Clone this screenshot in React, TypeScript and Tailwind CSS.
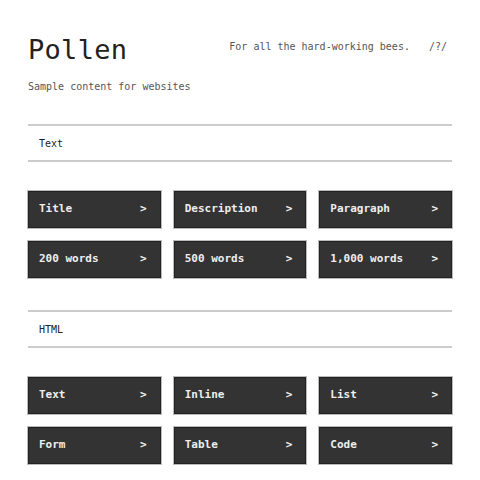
const mono = "font-['DejaVu_Sans_Mono','Liberation_Mono',monospace]";

const sections = [
  { title: "Text", items: ["Title", "Description", "Paragraph", "200 words", "500 words", "1,000 words"] },
  { title: "HTML", items: ["Text", "Inline", "List", "Form", "Table", "Code"] },
];

function Item({ label }: { label: string }) {
  return (
    <button className="flex h-[37px] items-center justify-between border border-[#222] bg-[#333] px-[10px] text-[11px] font-bold text-[#eee] shadow-[0_0_0_1px_#bbb]">
      <span>{label}</span>
      <span className="pr-[3px]">&gt;</span>
    </button>
  );
}

export default function App() {
  return (
    <div className={`min-h-[480px] w-[480px] bg-white px-[28px] pt-[33px] text-[#222] ${mono}`}>
      <header className="flex items-start justify-between">
        <div>
          <h1 className="text-[27px] leading-[34px] font-normal tracking-[0.3px]">Pollen</h1>
          <p className="mt-[12px] text-[10px] text-[#555]">Sample content for websites</p>
        </div>
        <div className="mt-[6px] mr-[5px] flex gap-[19px] text-[10px] text-[#555]">
          <span>For all the hard-working bees.</span>
          <span>/?/</span>
        </div>
      </header>

      {sections.map((section, i) => (
        <section key={section.title} className={i === 0 ? "mt-[30px]" : "mt-[32px]"}>
          <div className="flex h-[38px] items-center border-y-2 border-[#ccc] px-[11px] text-[10px] font-normal">
            {section.title}
          </div>
          <div className="mt-[29px] grid grid-cols-3 gap-x-[13px] gap-y-[13px]">
            {section.items.map((item) => (
              <Item key={item} label={item} />
            ))}
          </div>
        </section>
      ))}
    </div>
  );
}
